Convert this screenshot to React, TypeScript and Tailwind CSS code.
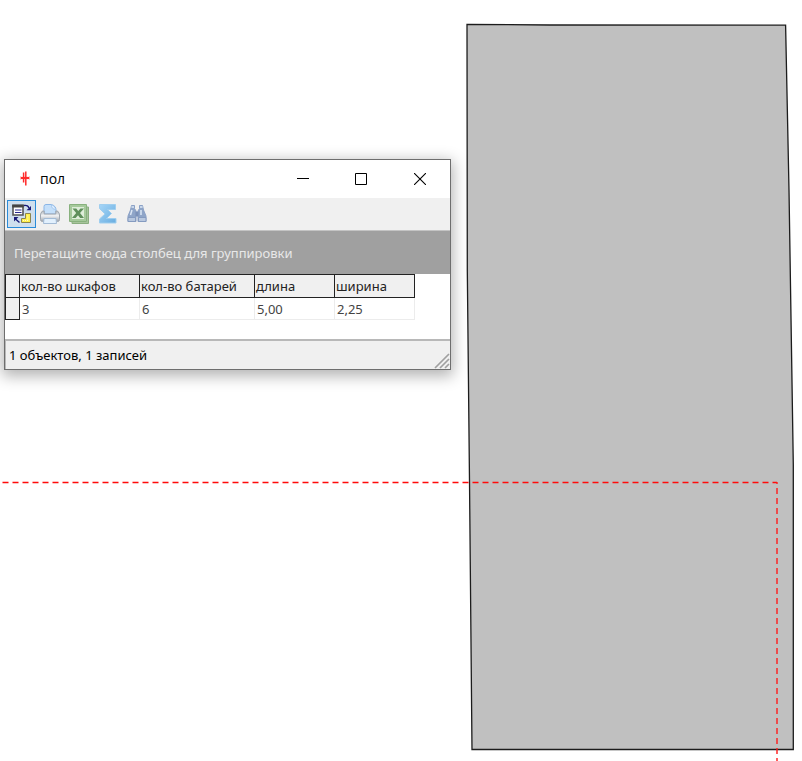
import React from "react";

const columns = ["кол-во шкафов", "кол-во батарей", "длина", "ширина"];
const records = [["3", "6", "5,00", "2,25"]];

function FloorPlan() {
  return (
    <svg className="absolute top-0 left-0" width="802" height="761" viewBox="0 0 802 761" aria-hidden="true">
      <path d="M467 24.3L550 25L785.6 25.2L789 190L793.3 465V749.5H472L469.5 480L467.3 270Z" fill="#c0c0c0" stroke="#1c1c1c" strokeWidth="1.3" />
      <path d="M2.5 482.5H777" fill="none" stroke="#ff0a0a" strokeWidth="1.3" strokeDasharray="6 4" />
      <path d="M777 482V484M777 488V761" fill="none" stroke="#ff1a1a" strokeWidth="1.4" strokeDasharray="6 4" />
    </svg>
  );
}

function AppIcon() {
  return (
    <svg width="12" height="16" viewBox="0 0 12 16" aria-hidden="true">
      <path d="M1 7H11" stroke="#ff2a2a" strokeWidth="2.2" />
      <path d="M4.6 1.5V11.5M6.8 .5V14.5" stroke="#ff2a2a" strokeWidth="1.5" />
      <path d="M1.5 5.5V8.5M10.5 5.5V8.5" stroke="#ffb0b0" strokeWidth="1" />
    </svg>
  );
}

function GroupIcon() {
  return (
    <svg width="22" height="22" viewBox="0 0 22 22" aria-hidden="true">
      <path d="M2 2.5H12V12H2Z" fill="#fff" stroke="#555" strokeWidth="1.6" />
      <path d="M1.2 1.5H12.8V4.5H1.2Z" fill="#444" />
      <path d="M4 7H10.5M4 9.5H10.5" stroke="#2d2d90" strokeWidth="1.2" />
      <path d="M14.5 10.5H19.5V19.5H10.5V15.5H14.5Z" fill="#fff04a" stroke="#8c8450" strokeWidth="1" />
      <path d="M12 17.5H18M16.8 12.5V18" stroke="#fffbd0" strokeWidth="1" strokeDasharray="1 1" />
      <path d="M13 2.5C16 2 17.5 3 17.8 5" fill="none" stroke="#181878" strokeWidth="1.4" />
      <path d="M20 3V7.2H15.5Z" fill="#181878" />
      <path d="M3 14H7.5L3 18.5Z" fill="#181878" />
      <path d="M4.5 16L8.5 19.5" stroke="#181878" strokeWidth="1.4" />
    </svg>
  );
}

function PrintIcon() {
  return (
    <svg width="22" height="22" viewBox="0 0 22 22" aria-hidden="true">
      <defs>
        <linearGradient id="printer-body" x1="0" y1="0" x2="0" y2="1">
          <stop offset="0" stopColor="#b4b9c0" />
          <stop offset=".45" stopColor="#f1f2f4" />
          <stop offset="1" stopColor="#9aa1ab" />
        </linearGradient>
      </defs>
      <path d="M5 11V3.5Q5 1.5 7 1.5H12.5Q17 3 17 7V11Z" fill="#c4dffa" stroke="#8ab5e6" />
      <path d="M12.5 2Q12 6 17 6.5" fill="#e6f2ff" stroke="#a5c8ee" />
      <path d="M3.5 8H5.2V11H16.8V8H18.5Q20.5 10 20.5 12V16.5Q20.5 18.5 18.5 18.5H3.5Q1.5 18.5 1.5 16.5V12Q1.5 10 3.5 8Z" fill="url(#printer-body)" stroke="#a0a7b0" />
      <path d="M5 15.5H17L17.5 20.5H4.5Z" fill="#e2f0fd" stroke="#a3bbd6" />
    </svg>
  );
}

function SheetIcon() {
  return (
    <svg width="22" height="22" viewBox="0 0 22 22" aria-hidden="true">
      <path d="M4 4H20.5V20.5H4Z" fill="#a7c49c" stroke="#8aae80" />
      <path d="M1.5 1.5H18.5V18.5H1.5Z" fill="#dfeeda" stroke="#88b17e" />
      <path d="M3 3H17V17H3Z" fill="none" stroke="#a5c99b" strokeWidth="2" />
      <path d="M4.5 5.5H8.3L10.2 8L12.5 5.5H16L12 10L16 15H12.1L10 12.3L7.6 15H4L8.2 10Z" fill="#5f8f5b" />
    </svg>
  );
}

function SumIcon() {
  return (
    <svg width="22" height="22" viewBox="0 0 22 22" aria-hidden="true">
      <defs>
        <linearGradient id="sigma-face" x1="0" y1="0" x2="1" y2="1">
          <stop offset="0" stopColor="#a5d5f7" />
          <stop offset="1" stopColor="#69ade0" />
        </linearGradient>
      </defs>
      <path d="M2.5 1.5H18.5V6.5H10.5L14.5 10.5L9.5 15.5H19V20H2.5V16L8 11L2.5 5.5Z" fill="url(#sigma-face)" stroke="#9fceef" />
    </svg>
  );
}

function FindIcon() {
  return (
    <svg width="22" height="22" viewBox="0 0 22 22" aria-hidden="true">
      <path d="M5.5 2.5H8.5V5.5L10 8V18.5H2V13L4.5 7ZM16.5 2.5H13.5V5.5L12 8V18.5H20V13L17.5 7Z" fill="#8fa5c8" stroke="#8ba1c6" />
      <path d="M9.5 8.5H12.5V13.5H9.5Z" fill="#7b91b8" />
      <path d="M6 7L4.5 12M15 7V12M5.5 4H8M14 4H16.5" fill="none" stroke="#dce7f5" strokeWidth="1.5" />
      <path d="M2 14.5H9.5V18.5H2ZM12.5 14.5H20V18.5H12.5Z" fill="#b9c8df" stroke="#859bc0" />
    </svg>
  );
}

const tools = [
  { label: "Печать", icon: <PrintIcon /> },
  { label: "Экспорт в Excel", icon: <SheetIcon /> },
  { label: "Сумма", icon: <SumIcon /> },
  { label: "Найти", icon: <FindIcon /> },
];

function TitleBar() {
  return (
    <header className="flex h-[38px] items-center bg-white pl-[14px]">
      <AppIcon />
      <h1 className="ml-[9px] grow font-['Open_Sans','Noto_Sans',sans-serif] text-[14px] leading-5">пол</h1>
      <button aria-label="Свернуть" className="flex h-full w-[58px] items-center justify-center">
        <svg width="12" height="12" viewBox="0 0 12 12"><path d="M0 5.5H12" stroke="#000" /></svg>
      </button>
      <button aria-label="Развернуть" className="flex h-full w-[58px] items-center justify-center">
        <svg width="12" height="12" viewBox="0 0 12 12"><path d="M.5 .5H11.5V11.5H.5Z" fill="none" stroke="#000" /></svg>
      </button>
      <button aria-label="Закрыть" className="flex h-full w-[60px] items-center justify-center">
        <svg width="12" height="12" viewBox="0 0 12 12"><path d="M0 0L12 12M12 0L0 12" stroke="#000" strokeWidth="1.1" /></svg>
      </button>
    </header>
  );
}

function RecordsTable() {
  return (
    <table className="w-[410px] table-fixed border-collapse text-left text-[13px] leading-5">
      <colgroup>
        <col className="w-[14px]" />
        <col className="w-[120px]" />
        <col className="w-[115px]" />
        <col className="w-[80px]" />
        <col className="w-[80px]" />
      </colgroup>
      <thead>
        <tr className="h-[23px] bg-[#f0f0f0]">
          <th className="border border-[#222] p-0" aria-label="Строка" />
          {columns.map((name) => (
            <th key={name} scope="col" className="border border-[#222] p-0 pl-px font-normal whitespace-nowrap text-[#222]">{name}</th>
          ))}
        </tr>
      </thead>
      <tbody>
        {records.map((row, i) => (
          <tr key={i} className="h-[22px] text-[#444]">
            <td className="border border-[#222] bg-[#f0f0f0] p-0" />
            {row.map((value, j) => (
              <td key={j} className="border border-[#ececec] p-0 pl-[2px]">{value}</td>
            ))}
          </tr>
        ))}
      </tbody>
    </table>
  );
}

export default function App() {
  return (
    <main className="relative min-h-screen overflow-hidden bg-white font-['Noto_Sans','Open_Sans',sans-serif] text-black">
      <FloorPlan />
      <section className="absolute top-[159px] left-[4px] w-[447px] border border-[#6e6e6e] bg-white shadow-[0_4px_14px_2px_rgba(0,0,0,0.3)]">
        <TitleBar />
        <div className="flex h-[33px] items-center gap-[7px] border-b border-[#c4c4c4] bg-[#f0f0f0] pl-[2px]">
          <button aria-label="Группировка" className="flex h-[28px] w-[29px] items-center justify-center border border-[#2a8bd8] bg-[#cfdfee]">
            <GroupIcon />
          </button>
          <div className="-ml-[4px] flex gap-[7px]">
            {tools.map((tool) => (
              <button key={tool.label} aria-label={tool.label}>{tool.icon}</button>
            ))}
          </div>
        </div>
        <div className="flex h-[43px] items-center bg-[#a0a0a0] pl-[9px] text-[13px] leading-5 text-[#e8e8e8]">
          Перетащите сюда столбец для группировки
        </div>
        <RecordsTable />
        <div className="h-[19px]" />
        <footer className="flex h-[30px] items-center justify-between border-t-2 border-l border-[#b8b8b8] bg-[#f0f0f0] pl-[3px] text-[13px] leading-5">
          <span>1 объектов, 1 записей</span>
          <svg className="self-end" width="16" height="16" viewBox="0 0 16 16" aria-hidden="true">
            <path d="M1 15L15 1M6 15L15 6M11 15L15 11" stroke="#a0a0a0" strokeWidth="1.7" />
          </svg>
        </footer>
      </section>
    </main>
  );
}
